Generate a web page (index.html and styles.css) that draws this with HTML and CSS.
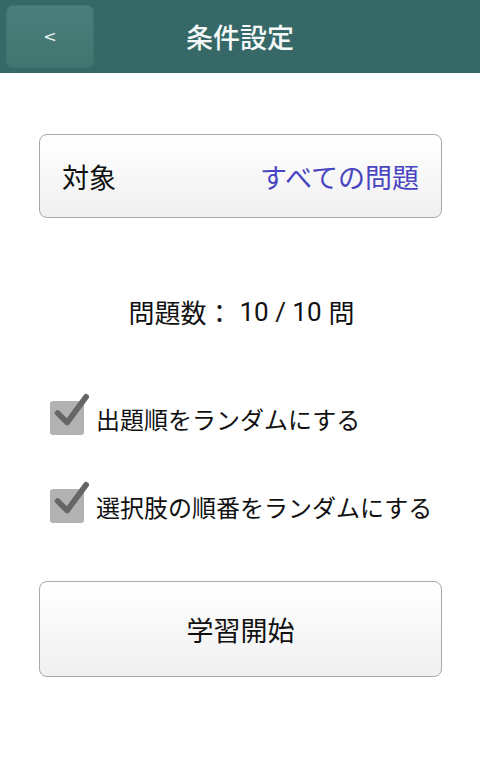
FILE: index.html
```html
<!DOCTYPE html>
<html lang="ja">
<head>
<meta charset="utf-8">
<title>条件設定</title>
<link rel="stylesheet" href="styles.css">
</head>
<body>
<header class="topbar">
  <button class="back">&lt;</button>
  <h1 class="title">条件設定</h1>
</header>
<main class="content">
  <div class="target">
    <span class="target-label">対象</span>
    <span class="target-value">すべての問題</span>
  </div>
  <p class="count">問題数： <span class="num">10 / 10</span> 問</p>
  <label class="check">
    <span class="box"><svg viewBox="0 0 40 40" width="40" height="40"><path d="M7 21 L17 31 L37 4" fill="none" stroke="#666666" stroke-width="6" stroke-linecap="round" stroke-linejoin="round"/></svg></span>
    <span class="check-text">出題順をランダムにする</span>
  </label>
  <label class="check">
    <span class="box"><svg viewBox="0 0 40 40" width="40" height="40"><path d="M7 21 L17 31 L37 4" fill="none" stroke="#666666" stroke-width="6" stroke-linecap="round" stroke-linejoin="round"/></svg></span>
    <span class="check-text">選択肢の順番をランダムにする</span>
  </label>
  <button class="start">学習開始</button>
</main>
</body>
</html>
```
FILE: styles.css
```css
html, body {
  margin: 0;
  padding: 0;
  background: #ffffff;
  font-family: "Noto Sans CJK JP", "Noto Sans", sans-serif;
  color: #111;
}
.topbar {
  height: 73px;
  background: #356866;
  display: flex;
  align-items: center;
  position: relative;
}
.back {
  position: absolute;
  left: 6px;
  top: 5px;
  width: 88px;
  height: 63px;
  border: 1px solid #3f7370;
  border-radius: 7px;
  background: linear-gradient(#4b7f7c, #41746f);
  color: #eaf3f2;
  font-family: "DejaVu Sans", sans-serif;
  font-size: 16px;
  padding: 0;
}
.title {
  margin: 0;
  width: 100%;
  text-align: center;
  color: #f4f8f8;
  font-size: 27px;
  font-weight: 500;
  line-height: 73px;
}
.content {
  padding: 61px 38px 0 39px;
  display: flex;
  flex-direction: column;
}
.target {
  height: 82px;
  border: 1px solid #a8a8a8;
  border-radius: 8px;
  background: linear-gradient(#ffffff, #f0f0f2);
  display: flex;
  align-items: center;
  justify-content: space-between;
  padding: 0 22px 0 22px;
  font-size: 27px;
}
.target-label { color: #111; }
.target-value { color: #4a45c0; }
.count {
  margin: 76px 0 0 0;
  height: 36px;
  display: flex;
  align-items: center;
  justify-content: center;
  gap: 7px;
  font-size: 26px;
  line-height: 36px;
  padding-left: 2px;
}
.num {
  font-family: Roboto, "Noto Sans", sans-serif;
  font-size: 26px;
}
.check {
  display: flex;
  align-items: center;
  gap: 12px;
  margin-left: 11px;
  height: 40px;
}
.count + .check { margin-top: 68px; }
.check + .check { margin-top: 48px; }
.box {
  width: 34px;
  height: 34px;
  background: #b2b2b2;
  border-radius: 3px;
  position: relative;
  flex: none;
}
.box svg {
  position: absolute;
  left: 1px;
  top: -8px;
  width: 38px;
  height: 38px;
}
.check-text {
  font-size: 24px;
  color: #111;
}
.start {
  margin-top: 55px;
  height: 96px;
  border: 1px solid #a8a8a8;
  border-radius: 8px;
  background: linear-gradient(#ffffff, #f0f0f2);
  font-family: "Noto Sans CJK JP", "Noto Sans", sans-serif;
  font-size: 27px;
  color: #111;
  padding: 0;
}
```
